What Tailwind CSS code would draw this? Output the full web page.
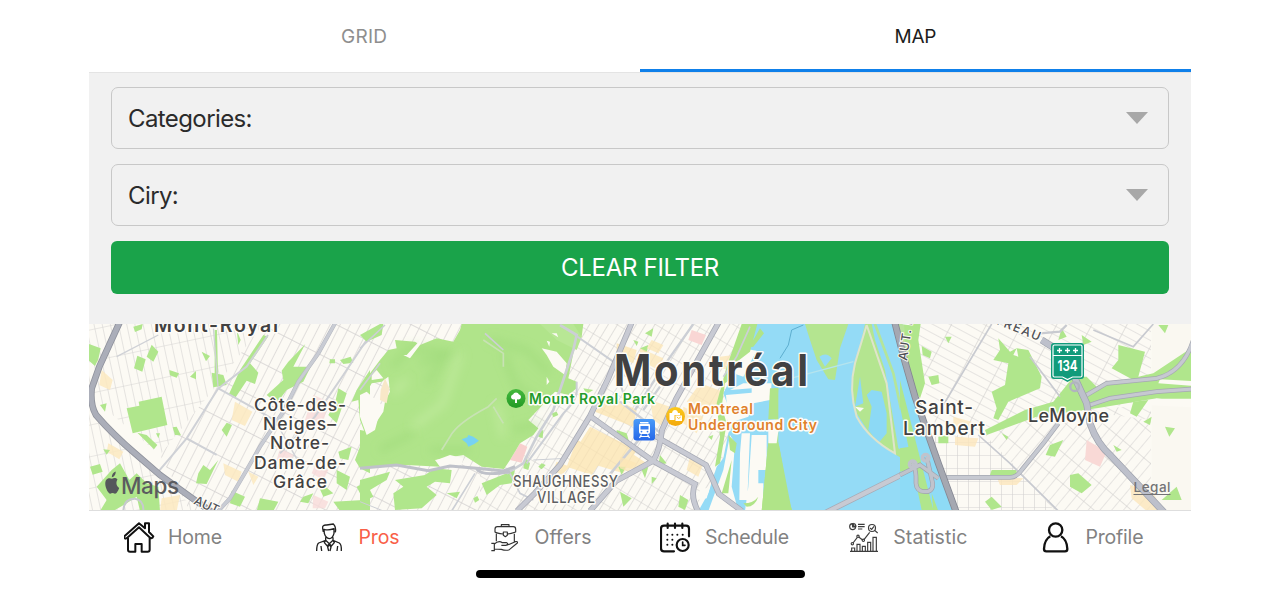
<!DOCTYPE html>
<html lang="en">
<head>
<meta charset="utf-8">
<title>Pros map</title>
<script src="https://cdn.jsdelivr.net/npm/@tailwindcss/browser@4"></script>
</head>
<body class="bg-white font-['Inter','Liberation_Sans',sans-serif] overflow-hidden">
<div class="mx-auto flex h-[590px] w-[1102px] flex-col">
  <div class="grid h-[72px] shrink-0 grid-cols-2 text-[19px] leading-[24px]">
    <div class="pt-6 text-center text-[#8e8e8e]"><svg class="mx-auto block h-6 w-[60px]" viewBox="0 0 60 24"><text x="6" y="19" textLength="46" fill="currentColor">GRID</text></svg></div>
    <div class="h-[72px] border-b-[3px] border-[#0f80ea] pt-6 text-center text-[#1c1c1c]"><svg class="mx-auto block h-6 w-[60px]" viewBox="0 0 60 24"><text x="8.500" y="19" textLength="42" fill="currentColor">MAP</text></svg></div>
  </div>
  <div class="flex h-[252px] shrink-0 flex-col border-t border-[#e4e4e4] bg-[#f1f1f1] px-[22px] pt-[14px] text-[24px] text-[#2b2b2b]">
    <div class="flex h-[62px] items-center justify-between rounded-[7px] border-[1.5px] border-[#c8c8c8] pl-4 pr-5">
      <span class="pt-px tracking-[-0.6px]">Categories:</span>
      <svg class="h-3 w-[22px]" viewBox="0 0 22 12"><path d="M0 0H22L11 12Z" fill="#a8a8a8"/></svg>
    </div>
    <div class="mt-[15px] flex h-[62px] items-center justify-between rounded-[7px] border-[1.5px] border-[#c8c8c8] pl-4 pr-5">
      <span class="pt-px tracking-[-0.6px]">Ciry:</span>
      <svg class="h-3 w-[22px]" viewBox="0 0 22 12"><path d="M0 0H22L11 12Z" fill="#a8a8a8"/></svg>
    </div>
    <button class="mt-[15px] flex h-[53px] items-center justify-center rounded-[6px] bg-[#1aa34a] pt-px text-[24px] tracking-[-0.3px] text-white">CLEAR FILTER</button>
  </div>
  <svg class="block h-[187px] w-[1102px] shrink-0" viewBox="89 324 1102 187" font-family="Inter, Liberation Sans, sans-serif">
    <defs>
      <pattern id="west" width="9" height="34" patternUnits="userSpaceOnUse" patternTransform="rotate(27)"><path d="M0 0V34M0 0H9" stroke="#d2d0cf" stroke-width="1.300" fill="none"/></pattern>
      <pattern id="town" width="8" height="20" patternUnits="userSpaceOnUse" patternTransform="rotate(31)"><path d="M0 0V20M0 0H8" stroke="#cfcdcc" stroke-width="1.200" fill="none"/></pattern>
      <pattern id="north" width="8" height="31" patternUnits="userSpaceOnUse" patternTransform="rotate(-12)"><path d="M0 0V31M0 0H8" stroke="#d5d3d2" stroke-width="1.200" fill="none"/></pattern>
      <pattern id="east" width="31" height="8" patternUnits="userSpaceOnUse" patternTransform="rotate(28)"><path d="M0 0V8M0 0H31" stroke="#d0cecd" stroke-width="1.200" fill="none"/></pattern>
      <pattern id="south" width="24" height="9" patternUnits="userSpaceOnUse" patternTransform="rotate(-50)"><path d="M0 0V9M0 0H24" stroke="#d0cecd" stroke-width="1.200" fill="none"/></pattern>
      <pattern id="lambert" width="11" height="13" patternUnits="userSpaceOnUse"><path d="M0 0V13M0 0H11" stroke="#d4d2d1" stroke-width="1.200" fill="none"/></pattern>
      <linearGradient id="train" x2="0" y2="1"><stop stop-color="#4a9bf8"/><stop offset="1" stop-color="#2567e8"/></linearGradient>
      <linearGradient id="park" x2="0" y2="1"><stop stop-color="#45b93e"/><stop offset="1" stop-color="#239a25"/></linearGradient>
      <linearGradient id="shop" x2="0" y2="1"><stop stop-color="#fbc91c"/><stop offset="1" stop-color="#f3a90c"/></linearGradient>
      <filter id="soft" x="-30%" y="-30%" width="160%" height="160%"><feGaussianBlur stdDeviation="14"/></filter>
    </defs>
    <rect x="89" y="324" width="1102" height="187" fill="#fcfaf4"/>
    <path d="M89 324H263L217 385 160 455 89 395Z" fill="url(#north)"/>
    <path d="M263 324H480V511H190L160 455 217 385Z" fill="url(#west)"/>
    <path d="M89 410L160 480 200 511H89Z" fill="url(#north)"/>
    <path d="M480 324H740V511H480Z" fill="url(#town)"/>
    <path d="M905 324H1151V420L1060 408 985 435 940 440Z" fill="url(#east)"/>
    <path d="M925 435H985L1015 466 1055 511H950Z" fill="url(#lambert)"/>
    <path d="M985 435L1060 408 1151 420V511H1055L1015 466Z" fill="url(#south)"/>

    <!-- western boroughs -->
    <g transform="translate(80 320) scale(.33333)">
      <g fill="#fbe9bf" fill-opacity=".85"><path d="M65 150L98 180 90 210 58 195Z M465 245L517 275 495 318 455 300Z M85 370L130 395 118 418 80 395Z M430 430L485 455 475 485 435 465Z M245 535L300 525 290 573H240Z M505 455L535 470 520 495Z M50 120L70 130 64 150Z"/></g>
      <g fill="#f8dbd9" fill-opacity=".8"><path d="M700 225L745 245 725 325 675 300Z M600 385L640 405 625 440 590 420Z M705 435L745 450 730 480 695 460Z M700 525L745 545 735 565H698Z"/></g>
      <g fill="#b0e68c">
        <path d="M27 72L62 85 55 118 45 138 27 122Z M215 74L235 95 220 125 200 110Z M172 107L197 118 187 155 162 145Z M160 20L188 12 185 28 165 36Z M268 150L297 160 290 173 270 166Z M348 153V178L330 170Z M365 95L390 108 378 124Z M140 265L178 257 176 245 245 230 262 315 158 340Z M172 338L200 345 232 375 222 388Z M228 340L240 340 235 355Z M278 322L290 320 303 346 285 345Z M470 30L482 60 475 75Z"/>
        <path d="M550 45L564 50 510 130 535 158 525 192 500 182 467 232 447 222 480 150Z M395 158L430 165 440 195 400 202Z M404 30H411L414 165H404Z M676 72L640 140 692 140 670 185 620 210 590 250 560 225 610 180 605 152 625 125Z M425 330L440 308 456 315 440 350Z M355 460L370 435 390 450 415 420 380 492 348 490Z M750 118H765V130H748Z M780 120L812 110 820 128 790 132Z"/>
        <path d="M870 150V460L840 445 825 420 855 340 840 300 835 240 815 245 830 210Z M775 205L800 220 770 310 745 285 765 250Z M775 395L815 380 805 420 780 415Z M30 440L60 432 68 455 38 464Z M70 388L90 390 80 404Z M95 450L120 430 148 480 170 460 200 490 235 500 240 573H180L170 530 140 550 100 573H60L80 540 50 500Z M455 512L495 530 480 560 450 550Z M540 535L595 545 580 573H530Z M705 475L760 520 730 530Z M770 450L810 470 800 510 770 490Z M670 530L700 520 685 550 660 545Z M830 500L870 480V573H780L760 545 850 540Z M60 255L80 250 75 275Z"/>
      </g>
      <g fill="none" stroke="#cfd1d6" stroke-width="8">
        <path d="M564 45L500 140 415 205 320 355 235 455" stroke-width="6"/><path d="M110 110L235 45" stroke-width="4"/><path d="M415 205L540 275 600 310M320 355L410 405" stroke-width="6"/><path d="M400 20L414 200" stroke-width="4"/>
        <path d="M870 45L790 165 705 290 600 400" stroke-width="6"/><path d="M590 310L655 425" stroke-width="4"/>
      </g>
      <path d="M765 10L715 100 655 185 610 275 540 380 500 450 450 535 415 573" fill="none" stroke="#b3b6bf" stroke-width="12"/><path d="M765 10L715 100 655 185 610 275 540 380 500 450 450 535 415 573" fill="none" stroke="#c9ccd4" stroke-width="9"/>
      <path d="M122 0L58 140 35 205Q30 255 48 285Q100 345 165 400L240 465 330 530 415 590" fill="none" stroke="#8f929c" stroke-width="20"/><path d="M122 0L58 140 35 205Q30 255 48 285Q100 345 165 400L240 465 330 530 415 590" fill="none" stroke="#abaeb9" stroke-width="15"/>
      <path d="M130 573Q132 535 165 536Q192 540 190 573" fill="none" stroke="#c6c9cf" stroke-width="6"/>
    </g>

    <!-- Mount Royal and downtown -->
    <g transform="translate(360 320) scale(.33333)">
      <g fill="#fce3ac" fill-opacity=".72"><path d="M690 320L830 390 790 460 690 430 640 400Z M650 360L740 400 695 465 620 440Z M745 225L830 270 820 320 705 275Z M590 425L630 440 605 465 580 450Z M770 70L830 90 820 130 770 110Z M800 390L860 430 830 450 790 440Z"/></g>
      <path d="M480 370L502 380 485 428 450 420Z" fill="#f8d0ce"/>
      <path d="M305 12H670L665 50 645 75 625 175 650 185V205L625 225 585 215 505 300 535 325 520 345 480 370 450 420 432 447 365 440 310 405 225 420 240 440 140 435 0 440V350L0 330 30 335 70 275 75 245 90 215 85 170 65 185 35 190 0 250V200L60 120 85 90 110 85 105 60 165 65 180 75 230 55 280 65 300 30Z" fill="#b0e48a"/>
      <path d="M540 12H640L665 50 650 90 590 60Z" fill="#b8e795"/>
      <g filter="url(#soft)" fill="none" stroke="#93d370" stroke-opacity=".5" stroke-width="15"><path d="M95 140L150 85 280 100 180 130M200 190L250 120M390 60L500 90 570 160M160 340L60 390M430 100L470 200 550 250M460 330L540 310M330 390L210 390"/></g>
      <g filter="url(#soft)" stroke="#c6eda4" stroke-opacity=".7" stroke-width="18" fill="none"><path d="M300 100L250 250 160 320M410 250L430 350M100 220L140 180"/></g>
      <path d="M410 235L385 260Q290 310 270 350L245 390M370 60L430 100V140M400 260L430 310" fill="none" stroke="#c8e2b4" stroke-width="5"/>
      <path d="M305 358L322 352 325 345 340 350 357 362 343 372 325 380 320 370Z" fill="#76d2f3"/>
      <g fill="#fcfaf4"><path d="M140 105L190 50 180 75 150 115 130 105Z M545 85L590 95 620 130 615 165 580 140 560 105Z M0 225L20 215 65 255 45 330 20 345 0 290Z M35 165L50 150 70 175 35 180Z M230 420L270 405 310 415 305 435 240 440Z M560 170L568 185 560 195Z M575 40L590 40 595 52Z M560 62L570 65 568 80Z"/></g>
      <path d="M75 175L88 205 80 250 60 240 62 210Z" fill="#f8e8c8"/>
      <g fill="#b0e68c"><path d="M0 480L90 455 80 480 30 510 40 530 0 550Z M105 480L195 465 225 445 275 450 270 490 225 485 200 500 230 525 185 565 105 570 100 520 130 500Z M365 490L465 450 455 490 420 495 380 525Z M495 410L510 430 505 450 490 445Z M535 440L545 430 557 435 545 448Z M575 280L590 275 595 285 580 292Z M535 335L550 330 548 355 535 350Z M670 205L700 210 680 222Z M340 535L352 528 358 540 345 548Z M770 330L800 340 810 375 770 345Z M775 440L797 440 785 465Z M260 520L300 515 290 535Z M840 85L865 75 860 100Z M0 45L60 12H70L65 45 20 65Z"/></g>
      <g fill="none" stroke="#cccfd5" stroke-width="8">
        <path d="M600 15L650 45 640 90 610 180 580 270 530 350 490 430 440 460"/><path d="M645 45L760 125 790 220M650 185V215Q650 240 610 280L500 430" stroke-width="6"/><path d="M450 460Q465 490 480 520L520 540M345 460L275 573M375 40L430 90" stroke-width="5"/>
        <path d="M0 85L75 15M0 210L60 130" stroke-width="5"/><path d="M870 320L735 480" stroke-width="8"/><path d="M520 420L620 415M0 545L70 573" stroke-width="3"/>
      </g>
      <path d="M0 445L110 435 205 452 270 438 350 445 430 453 465 440 M350 447Q365 470 450 455" fill="none" stroke="#bfc1c9" stroke-width="9"/>
    </g>

    <!-- old port and river -->
    <g transform="translate(620 320) scale(.33333)">
      <g fill="#fce5b6" fill-opacity=".75"><path d="M60 85L130 115 115 150 60 120Z M95 60L130 75 115 100 80 85Z M240 190L310 215 300 285 200 245Z M190 260L250 290 230 340 190 310Z M300 110L340 105 325 150 290 140Z M90 240L150 260 130 320 100 300Z M210 410L250 430 235 470 200 450Z M0 410L50 430 25 455 0 445Z"/></g>
      <path d="M215 30L258 45 245 75 205 60Z" fill="#f9d6d4"/>
      <path d="M395 12H870V573H235L265 520 290 440 310 415 325 340 340 300 310 220 335 170 360 120Z" fill="#94dbf6"/>
      <g fill="#fcfaf4"><path d="M365 85L410 92 395 120 370 170 340 160 330 125Z M370 190H455L450 240 400 250 385 290 325 310 318 225 395 218V205L330 210Z M330 345L345 370 335 500 355 573H265L310 450Z M365 340H390L382 540H358L360 400Z M395 345H440V450H415V490H430V573H375L385 500Z M240 510L270 500 260 535 230 540Z"/></g>
      <g fill="#b0e488"><path d="M365 12H412L390 95 345 130 335 175 315 190 305 260 320 310 300 430 285 440 300 350 290 250 320 140Z M420 25L432 40 400 80 370 85 400 60Z M462 205H475V570H515L475 365 445 365 425 573H475Z M370 550Q400 550 415 530 405 560 380 560Z M325 345L350 370 345 400 330 390Z M320 470L335 420 325 520 305 520Z"/></g>
      <path d="M445 365H475L490 450 500 520 517 573H425Z" fill="#b0e488"/>
      <path d="M555 12H685L660 85 645 180 625 178 590 120 570 60Z" fill="#b4e590"/>
      <path d="M598 110Q620 95 635 115L615 140Z" fill="#94dbf6"/>
      <path d="M735 12Q700 75 705 130Q685 210 710 290Q745 355 810 400L870 430V570H630L870 450V375L830 390 800 190 760 12Z" fill="#94dbf6"/>
      <path d="M735 12L720 80 700 150 695 210 710 280 755 350 825 403 870 430V405L835 385 810 240 795 150 765 60 755 12Z" fill="#b4e590"/>
      <path d="M740 80L720 170 730 250 705 260 720 170ZM755 210L785 215 800 280V340L775 370 745 330 755 260 740 225Z" fill="#8cd9f5"/>
      <path d="M740 15L705 130Q685 210 710 290Q745 355 825 400L800 190 740 15" fill="none" stroke="#dfe4cb" stroke-width="6"/>
      <path d="M705 260L732 264 720 275Z" fill="#fcfaf4"/>
      <path d="M765 12L820 160 865 370" fill="none" stroke="#b5e59a" stroke-width="8"/>
      <path d="M825 12H870V220L845 140Z" fill="#b9e49c"/>
      <path d="M450 205H475L470 298H445Z" fill="#b0e488"/><path d="M445 300L480 298 470 370H445Z" fill="#fcfaf4"/>
      <path d="M550 15L515 30 505 75 480 115" fill="none" stroke="#5caecf" stroke-width="3"/>
      <path d="M455 190L700 125" stroke="#b5e4ee" stroke-width="4"/>
      <g fill="#b0e68c"><path d="M75 40L100 25 95 50Z M40 60L55 65 50 78Z M65 450L85 440 75 475Z M95 470L110 475 95 492Z M120 405L140 430 115 435Z M0 515L35 535 10 560Z M180 525L205 540 195 570 175 560Z M265 350L280 345 275 360Z"/></g>
      <g fill="none" stroke="#cccfd5" stroke-width="9"><path d="M220 12L130 140 45 270M0 245L130 345M120 200L70 270" stroke-width="7"/><path d="M390 20L350 110 310 170" stroke-width="5"/></g>
    </g>

    <path d="M632 322L608 379 590 416 560 465 535 493 517 511M590 416L653 461 695 484Q690 496 698 511M653 461L616 481 590 511M720 320L676 399 662 430Q660 450 653 461M655 436L706 465Q713 480 719 494L742 511M825 513L911 470" fill="none" stroke="#a6a9b4" stroke-width="5.800"/>
    <path d="M632 322L608 379 590 416 560 465 535 493 517 511M590 416L653 461 695 484Q690 496 698 511M653 461L616 481 590 511M720 320L676 399 662 430Q660 450 653 461M655 436L706 465Q713 480 719 494L742 511M825 513L911 470" fill="none" stroke="#c8cad3" stroke-width="4.300"/>

    <!-- south shore -->
    <g transform="translate(900 320) scale(.33333)">
      <path d="M0 110L40 235 80 350 165 573H0Z" fill="#8edbf6"/>
      <rect x="755" y="12" width="118" height="561" fill="#faf8f1"/>
      <g fill="#fbe6bb" fill-opacity=".8"><path d="M160 290L215 305 205 330 160 315Z M165 350L235 355 225 380 165 375Z M290 470L370 475 350 495H300Z M690 495L760 520 790 573H740L695 535Z"/></g><path d="M560 360L620 395 600 440 555 420Z" fill="#f9d9d6"/>
      <g fill="#b0e68c"><path d="M12 12H62L55 60 75 190 60 235 30 190 20 110Z M65 78L95 95 90 115 68 105Z M85 170L115 165 118 190 95 195Z M135 50L155 50 145 70Z M295 55L330 95 350 85 385 90 425 170 420 205 325 245 295 300 280 295 290 265 275 215 315 195 325 130 280 120 300 90Z M655 75L735 95 715 170 760 160 873 85V250L770 235 590 265 410 290 260 345 255 330 375 270 460 245 520 170 560 170 590 200 700 180 635 145 655 120Z M545 45L575 65 550 75Z M485 25L500 50 475 60Z M775 15H805L795 40Z M115 350L145 345V370H115Z M275 450H350V465H270Z M450 375L490 360 465 410 437 405Z M510 465L535 460 575 495 545 520 510 500Z M795 320L825 325 808 350Z M730 305L755 290 750 315Z M255 545L275 530 305 560 275 570Z M785 540L830 500 845 540Z M305 340L325 350 320 360Z M640 375L665 390 650 395Z"/><path d="M0 385L30 380 45 420 30 450 0 455Z M0 180L100 570H65L0 260Z M95 520L115 573H100Z"/></g>
      <path d="M780 178L873 183V197L775 190Z M350 85L340 105 355 110Z" fill="#fcfaf4"/><path d="M590 268L770 236H873V262L735 255 690 290 700 258Z" fill="#fcfaf4"/><path d="M700 245L745 240 710 290 690 280Z" fill="#b0e68c"/>
      <g fill="none" stroke="#c8cad0" stroke-width="5"><path d="M275 12L130 255M390 110L480 230M235 345L330 430 475 573M580 30L700 80 760 12"/><path d="M420 40L480 35 500 15" stroke-width="7"/></g>
      <path d="M130 472H330Q350 472 365 450L430 370 475 310M560 225L620 190 770 175Q850 155 880 60M570 255L630 235 770 215 875 207" fill="none" stroke="#a5a8b2" stroke-width="14"/>
      <path d="M130 472H330Q350 472 365 450L430 370 475 310M560 225L620 190 770 175Q850 155 880 60M570 255L630 235 770 215 875 207" fill="none" stroke="#c6c9d1" stroke-width="10"/>
      <path d="M425 60L520 120M525 175L560 250 570 310Q590 370 635 410L795 580" fill="none" stroke="#9ea2ad" stroke-width="21"/><path d="M425 60L520 120M525 175L560 250 570 310Q590 370 635 410L795 580" fill="none" stroke="#bdc0cb" stroke-width="17"/>
      <circle cx="524" cy="200" r="13" fill="none" stroke="#b1b4bf" stroke-width="7"/>
      <path d="M-20 -10L12 115 45 230 78 325 115 430 170 580" fill="none" stroke="#858893" stroke-width="21"/><path d="M-20 -10L12 115 45 230 78 325 115 430 170 580" fill="none" stroke="#a5a8b1" stroke-width="16"/>
      <g fill="none" stroke="#9fa3ae" stroke-width="14"><path d="M0 465L60 435 115 475M35 430Q50 440 48 490Q50 515 75 515Q100 515 98 490L80 410"/></g><g fill="none" stroke="#c0c3cc" stroke-width="10"><path d="M0 465L60 435 115 475M35 430Q50 440 48 490Q50 515 75 515Q100 515 98 490L80 410"/><circle cx="38" cy="433" r="10"/><circle cx="77" cy="413" r="10"/></g>
    </g>

    <!-- labels -->
    <g fill="#414142" stroke="#fffdf8" stroke-width="3" stroke-linejoin="round" paint-order="stroke" font-weight="600">
      <text x="154" y="332" font-size="19.500" textLength="124">Mont-Royal</text>
      <g font-size="17.500" font-weight="500"><text x="254" y="411" textLength="92">Côte-des-</text><text x="263" y="430" textLength="73">Neiges–</text><text x="270" y="449" textLength="59">Notre-</text><text x="254" y="469" textLength="92">Dame-de-</text><text x="273" y="488" textLength="54">Grâce</text></g>
      <text transform="translate(614 386) scale(.92 1)" font-size="43.500" font-weight="700" textLength="211">Montréal</text>
      <g font-size="19" font-weight="500"><text x="915" y="413.500" textLength="58">Saint-</text><text x="903" y="434.500" textLength="82">Lambert</text></g><text x="1028" y="421.500" font-size="18" font-weight="500" textLength="81">LeMoyne</text>
      <g fill="#5e5f62" font-size="16" font-weight="500"><text transform="translate(513 486.500) scale(.82 1)" textLength="128">SHAUGHNESSY</text><text transform="translate(537 503) scale(.82 1)" textLength="71">VILLAGE</text></g>
      <g font-size="14" fill="#239b2b"><text x="529" y="403.500" textLength="126">Mount Royal Park</text></g>
      <g font-size="14" fill="#df812c"><text x="688" y="414" textLength="65">Montreal</text><text x="688" y="430" textLength="129">Underground City</text></g>
      <g font-size="12.500" font-weight="500" stroke-width="2" fill="#505157"><text transform="translate(193 503.500) rotate(25)" textLength="42">AUT. D</text><text transform="translate(907 361) rotate(-82)" textLength="44">AUT. R</text><text transform="translate(994 323) rotate(22)" textLength="48">TREAU</text></g>
    </g>
    <g><circle cx="516" cy="398.500" r="9.500" fill="url(#park)"/><path d="M511.500 398.500a2.600 2.600 0 0 1 1.500-4 3.200 3.200 0 0 1 6 0 2.600 2.600 0 0 1 1.500 4 3 3 0 0 1-3.500.8V403h-2v-3.700a3 3 0 0 1-3.500-.8Z" fill="#fff"/></g>
    <rect x="633.500" y="419" width="21.500" height="21.500" rx="3" fill="url(#train)"/><path d="M640 423H648.500V422H640ZM639 425Q639 423.500 641 423.500H648Q650 423.500 650 425V432Q650 434 648 434H641Q639 434 639 432Z" fill="#fff"/><path d="M641.500 434.500L639.500 438M647.500 434.500L649.500 438M641 436.500H648" stroke="#fff" stroke-width="1.200"/><rect x="640.500" y="426" width="8" height="3.500" fill="#397ff0"/><circle cx="641.500" cy="431.600" r=".9" fill="#397ff0"/><circle cx="647.500" cy="431.600" r=".9" fill="#397ff0"/>
    <circle cx="675.500" cy="416.500" r="9.500" fill="url(#shop)"/><path d="M669.500 413H672Q672.500 410 675 410T678 413H680V415H674.500V420H669.500Z" fill="#fff"/><path d="M675.500 415.500H682V421H675.500Z" fill="#fff"/><path d="M676.800 417Q678.700 420 680.700 417" fill="none" stroke="#f7b514" stroke-width=".9"/>
    <path d="M1054 343H1081Q1084 343 1084 346V376Q1084 379 1081 379H1073L1067.500 382 1062 379H1054Q1051 379 1051 376V346Q1051 343 1054 343Z" fill="#119b7b"/><path d="M1054.500 345H1080.500Q1082 345 1082 346.500V375.500Q1082 377 1080.500 377H1072.500L1067.500 379.500 1062.500 377H1054.500Q1053 377 1053 375.500V346.500Q1053 345 1054.500 345ZM1053 355.500H1082" fill="none" stroke="#fff" stroke-width="1.200"/><path d="M1057 350.500H1062M1059.500 348V353M1065 350.500H1070M1067.500 348V353M1073 350.500H1078M1075.500 348V353" stroke="#fff" stroke-width="1.300"/><text x="1057.500" y="371" font-size="14.500" font-weight="700" fill="#fff" textLength="20" lengthAdjust="spacingAndGlyphs">134</text>
    <path transform="translate(0 1)" d="M117.500 478.600C115.800 476.400 113.500 477 112 477.700C110 476.900 107.200 476.900 105.800 479.500C104.200 483.500 106.500 489.300 108.700 491.800C110 493.300 111 492.400 112.500 492.100C114 492.400 115.200 493.300 116.500 491.900C117.800 490.400 118.700 488.600 119.200 487C116.800 486 115.300 481.500 117.500 478.600ZM111.800 476.300C111.700 473.400 113.600 471 115.700 470.500C115.900 473.400 114.200 476 111.800 476.300Z" transform-origin="112 482" fill="#55575b"/>
    <text x="121" y="494" font-size="22.500" font-weight="500" fill="#5b5c60" textLength="58">Maps</text>
    <text x="1133.500" y="492" font-size="13.500" font-weight="500" fill="#737376" textLength="37">Legal</text><path d="M1133.500 494.500H1170.500" stroke="#737376"/>
  </svg>
  <nav class="-mt-px grid h-[53px] shrink-0 grid-cols-6 border-t border-[#dedede] bg-white text-[19.500px] leading-[31px] text-[#828282]">
    <div class="flex pt-[11px] pl-[34.500px]"><svg class="h-[31px] w-[31px]" viewBox="72 36 93 93" fill="none" stroke="#111" stroke-width="6" stroke-linejoin="round"><path d="M84 84V119Q84 125 90 125H106V102H125V125H143Q149 125 149 119V84M117 40L74 78Q70 84 76 86L81 84 117 52 151 84Q158 86 160 79L147 66V40H135V55Z"/></svg><svg class="ml-[13.5px] h-[31px] w-[60px]"><text x="0" y="21.500" fill="currentColor" textLength="54">Home</text></svg></div>
    <div class="flex pt-[11px] pl-[41.3px] text-[#f95f48]"><svg class="h-[31px] w-[31px]" viewBox="642 36 93 93" fill="none" stroke="#222" stroke-width="4" stroke-linejoin="round"><path d="M670 66L668 55Q666 44 680 45L700 42Q709 50 706 67M672 58Q686 62 702 56L702 70Q698 85 688 86Q677 84 673 70ZM677 82V91L688 101 699 91V82M677 91L656 99Q650 103 650 123M699 91L718 99Q725 104 724 123M677 91L673 98 682 108 688 101 694 108 703 98 699 91M688 104L683 111 686 123M688 104L693 111 690 123M663 108L665 123M713 108L711 123"/></svg><svg class="ml-[13.5px] h-[31px] w-[60px]"><text x=".5" y="21.500" fill="currentColor" textLength="41">Pros</text></svg></div>
    <div class="flex pt-[11px] pl-[33.7px]"><svg class="h-[31px] w-[31px]" viewBox="60 36 93 93" fill="none" stroke="#333" stroke-width="3.500" stroke-linejoin="round"><path d="M94 50V44H117V50M82 50H130Q137 50 137 58V66Q120 72 112 72M99 72Q80 70 75 66V58Q75 50 82 50M100 66H112V76L106 80 100 76ZM79 71V94M133 71V98M64 100H73V122H64M73 102Q86 90 97 98H110Q117 102 108 106H94M110 106L136 95Q144 93 142 99L118 119Q108 123 94 118L73 117"/></svg><svg class="ml-[13.5px] h-[31px] w-[62px]"><text x="-.5" y="21.500" fill="currentColor" textLength="57">Offers</text></svg></div>
    <div class="flex pt-[11px] pl-[20px]"><svg class="h-[31px] w-[31px]" viewBox="570 36 93 93" fill="none" stroke="#111" stroke-width="6.500" stroke-linecap="round"><path d="M612 124H582Q573 124 573 115V56Q573 47 582 47H648Q657 47 657 56V79M593 41V54M615 41V54M637 41V54"/><circle cx="638" cy="105" r="18"/><path d="M638 96V106H645" stroke-width="5"/><path d="M592 74h.1M607 74h.1M622 74h.1M638 74h.1M592 89h.1M607 89h.1M592 104h.1M607 104h.1" stroke-width="6"/></svg><svg class="ml-[13.5px] h-[31px] w-[88px]"><text x="0" y="21.500" fill="currentColor" textLength="84">Schedule</text></svg></div>
    <div class="flex pt-[11px] pl-[25.3px]"><svg class="h-[31px] w-[31px]" viewBox="57 36 93 93" fill="none" stroke="#3c3c3c" stroke-width="3.500"><path d="M60 124H144M65 124V114H74V124M81 124V103H90V124M97 124V109H106V124M113 124V97H122V124M129 124V82H139V124M69 99L82 82M86 81L98 90M102 89L119 67M84 43H104M84 50H104M84 57H97M67 41A9 9 0 1 0 77 51H68ZM70 40V48H78Q77 41 70 40M134 61L143 69"/><circle cx="67" cy="101" r="3.500"/><circle cx="84" cy="79" r="3.500"/><circle cx="100" cy="91" r="3.500"/><circle cx="126" cy="54" r="10.500"/><path d="M120 54L125 58 132 49"/></svg><svg class="ml-[13.5px] h-[31px] w-[80px]"><text x=".3" y="21.500" fill="currentColor" textLength="74">Statistic</text></svg></div>
    <div class="flex pt-[11px] pl-[33.7px]"><svg class="h-[31px] w-[31px]" viewBox="633 36 93 93" fill="none" stroke="#111" stroke-width="7" stroke-linejoin="round"><circle cx="677" cy="60" r="20"/><path d="M661 79Q643 89 642 117Q642 124 649 124H705Q712 124 712 117Q711 89 693 79"/></svg><svg class="ml-[13.5px] h-[31px] w-[62px]"><text x="-.5" y="21.500" fill="currentColor" textLength="58">Profile</text></svg></div>
  </nav>
  <div class="mx-auto mt-[7px] h-[7.500px] w-[329px] shrink-0 rounded-full bg-black"></div>
</div>
</body>
</html>
